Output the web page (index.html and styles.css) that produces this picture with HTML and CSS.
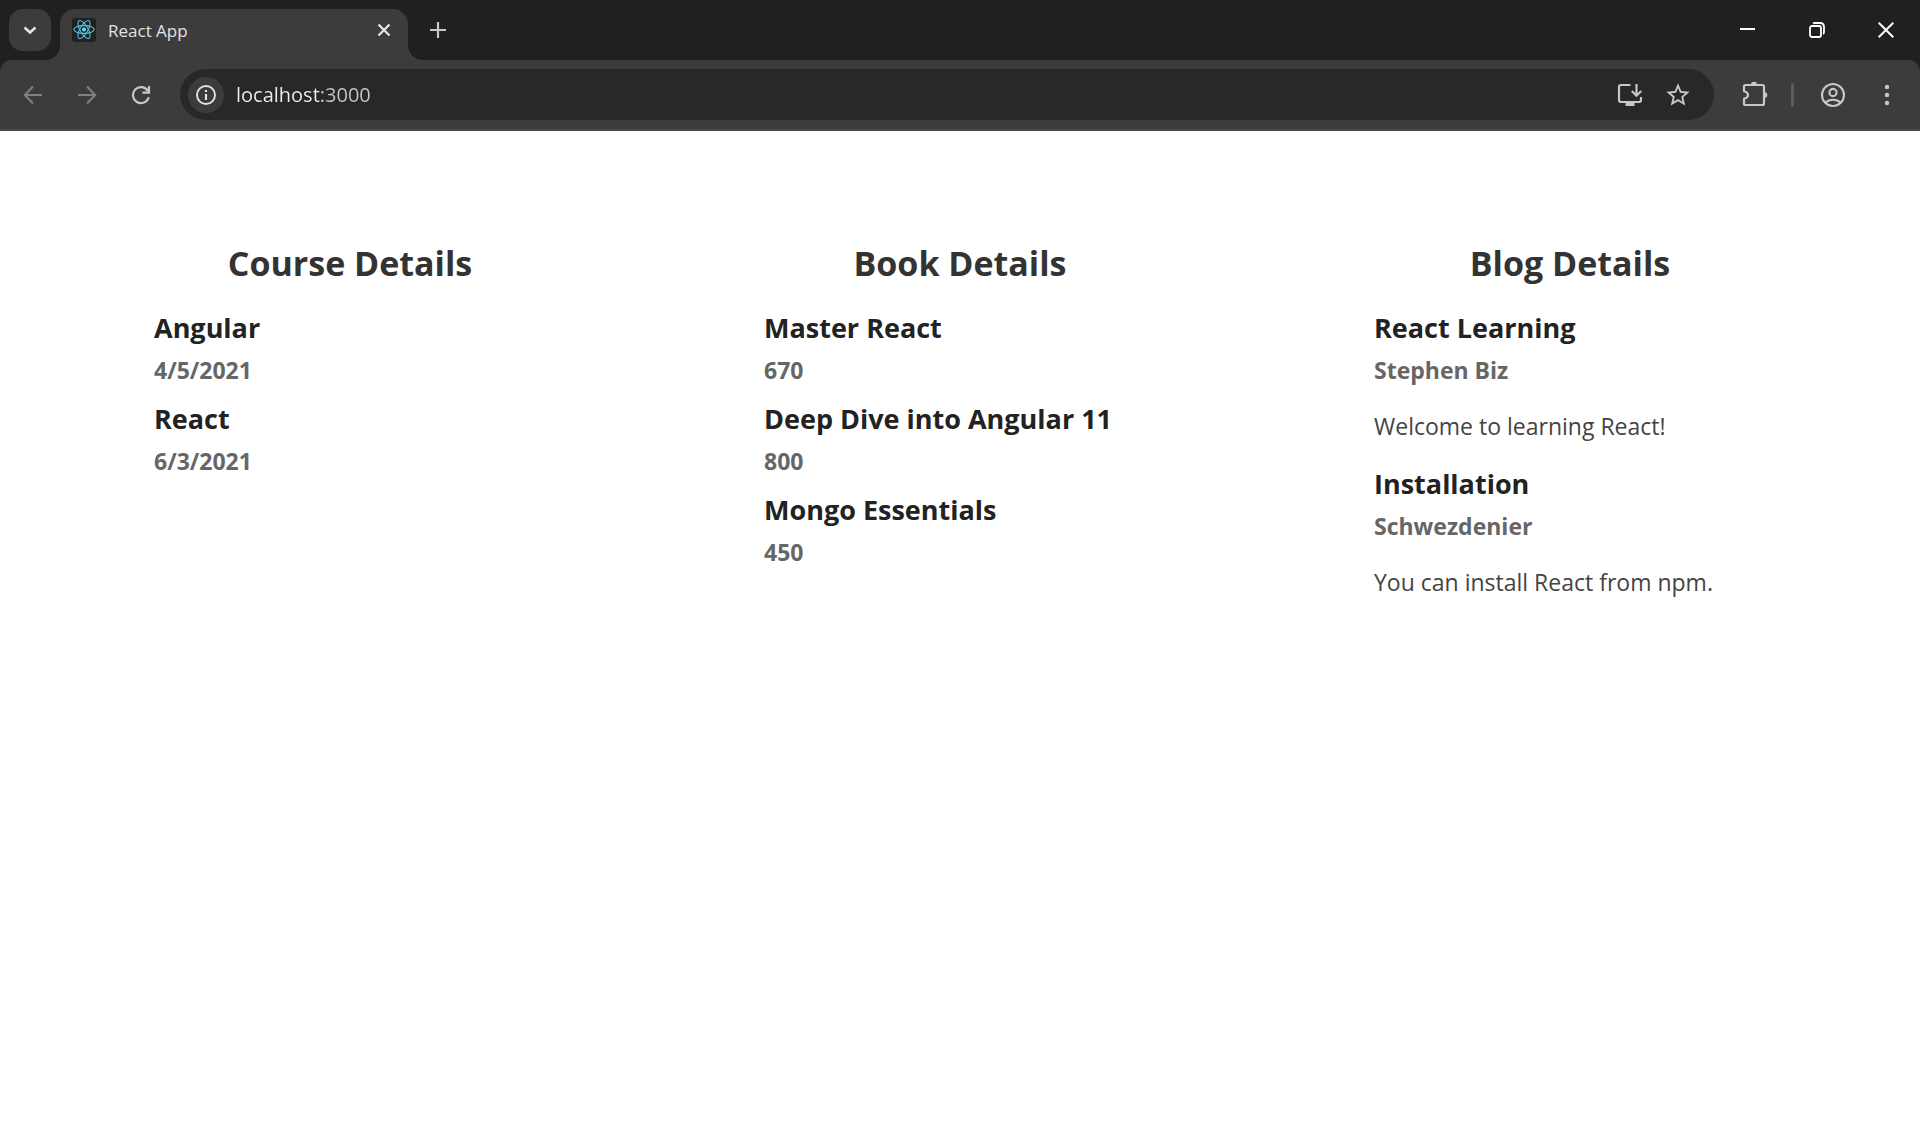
FILE: index.html
```html
<!DOCTYPE html>
<html lang="en">
<head>
<meta charset="utf-8">
<title>React App</title>
<link rel="stylesheet" href="styles.css">
</head>
<body>
<header class="browser">
  <div class="tab-strip">
    <button class="tab-search" aria-label="Search tabs">
      <svg width="14" height="14" viewBox="0 0 14 14"><path d="M1.500 4.500l5.500 5 5.500-5" fill="none" stroke="currentColor" stroke-width="2.500"/></svg>
    </button>
    <div class="tab">
      <svg class="favicon" width="24" height="24" viewBox="0 0 24 24">
        <rect width="24" height="24" rx="3" fill="#212121"/>
        <g fill="none" stroke="#53c1de" stroke-width="1.100">
          <ellipse cx="12" cy="11.500" rx="10.200" ry="3.900"/>
          <ellipse cx="12" cy="11.500" rx="10.200" ry="3.900" transform="rotate(60 12 11.500)"/>
          <ellipse cx="12" cy="11.500" rx="10.200" ry="3.900" transform="rotate(120 12 11.500)"/>
        </g>
        <circle cx="12" cy="11.500" r="2" fill="#61dafb"/>
      </svg>
      <span class="tab-title">React App</span>
      <button class="tab-close" aria-label="Close tab">
        <svg width="14" height="14" viewBox="0 0 14 14"><path d="M1.500 1.500l11 11M12.500 1.500l-11 11" fill="none" stroke="currentColor" stroke-width="2.300"/></svg>
      </button>
    </div>
    <button class="new-tab" aria-label="New tab">
      <svg width="16" height="16" viewBox="0 0 16 16"><path d="M8 0v16M0 8h16" fill="none" stroke="currentColor" stroke-width="2.200"/></svg>
    </button>
    <div class="window-controls">
      <button aria-label="Minimize"><svg width="16" height="16" viewBox="0 0 16 16"><path d="M0 7h15" stroke="currentColor" stroke-width="2"/></svg></button>
      <button aria-label="Restore"><svg width="16" height="16" viewBox="0 0 16 16" fill="none" stroke="currentColor" stroke-width="1.800"><rect x="1" y="4" width="11" height="11" rx="2"/><path d="M4 1.500Q4.500 1 6 1h5q4 0 4 4v5q0 1.500-1 2"/></svg></button>
      <button aria-label="Close"><svg width="16" height="16" viewBox="0 0 16 16"><path d="M.7.700l14.600 14.600M15.300.700L.7 15.300" stroke="currentColor" stroke-width="2"/></svg></button>
    </div>
  </div>
  <div class="toolbar">
    <button class="tool dim" aria-label="Back"><svg width="20" height="20" viewBox="0 0 20 20"><path d="M19 10H2.500M10 1.500L1.800 10l8.200 8.500" fill="none" stroke="currentColor" stroke-width="2.100"/></svg></button>
    <button class="tool dim" aria-label="Forward"><svg width="20" height="20" viewBox="0 0 20 20"><path d="M1 10h16.500M10 1.500l8.200 8.500-8.200 8.500" fill="none" stroke="currentColor" stroke-width="2.100"/></svg></button>
    <button class="tool" aria-label="Reload"><svg width="20" height="20" viewBox="0 0 20 20" fill="none" stroke="currentColor" stroke-width="2.200"><path d="M17.700 12.200A8 8 0 1 1 17 6.200"/><path d="M18 1v6.700h-6.700"/></svg></button>
    <form class="omnibox">
      <button class="site-info" type="button" aria-label="View site information"><svg width="20" height="20" viewBox="0 0 20 20"><circle cx="10" cy="10" r="9" fill="none" stroke="currentColor" stroke-width="1.900"/><path d="M10 9v6M10 5v2" stroke="currentColor" stroke-width="2.100"/></svg></button>
      <input class="address" type="text" value="localhost:3000" aria-label="Address and search bar">
      <button class="tool" type="button" aria-label="Install app"><svg width="26" height="24" viewBox="0 0 26 24" fill="none" stroke="currentColor" stroke-width="2.200"><path d="M13.500 2H4Q2 2 2 4v13q0 2 2 2h18q2 0 2-2v-3"/><path d="M8.500 19h9v4h-9z" fill="currentColor" stroke="none"/><path d="M19.500 1v11M14.800 8l4.700 4.700L24.200 8"/></svg></button>
      <button class="tool" type="button" aria-label="Bookmark this tab"><svg width="28" height="28" viewBox="0 0 24 24"><path fill="currentColor" d="M22 9.240l-7.190-.62L12 2 9.190 8.630 2 9.240l5.460 4.730L5.820 21 12 17.270 18.180 21l-1.630-7.030L22 9.240zM12 15.400l-3.760 2.270 1-4.280-3.320-2.880 4.380-.38L12 6.100l1.710 4.040 4.380.38-3.320 2.880 1 4.280L12 15.400z"/></svg></button>
    </form>
    <button class="tool" aria-label="Extensions"><svg width="28" height="28" viewBox="0 0 28 28"><path d="M4.500 4h17q1.500 0 1.500 1.500v17q0 1.500-1.500 1.500h-17Q3 24 3 22.500v-4.700q4-1 4-3.800t-4-3.800V5.500Q3 4 4.500 4z" fill="none" stroke="currentColor" stroke-width="2.200"/><path d="M10 4a3 3.300 0 0 1 6 0zM23 11a3.300 3 0 0 1 0 6z" fill="currentColor"/></svg></button>
    <span class="separator"></span>
    <button class="tool" aria-label="Profile"><svg width="26" height="26" viewBox="0 0 26 26" fill="none" stroke="currentColor" stroke-width="2.100"><circle cx="13" cy="13" r="11"/><circle cx="13" cy="10.500" r="3.600"/><path d="M5.500 20.500q3-2.800 7.500-2.800t7.500 2.800"/></svg></button>
    <button class="tool" aria-label="Menu"><svg width="6" height="22" viewBox="0 0 6 22" fill="currentColor"><circle cx="3" cy="3" r="2.200"/><circle cx="3" cy="11" r="2.200"/><circle cx="3" cy="19" r="2.200"/></svg></button>
  </div>
</header>
<main class="details">
  <section class="column">
    <h2>Course Details</h2>
    <div class="items">
      <article class="item"><h3>Angular</h3><h4>4/5/2021</h4></article>
      <article class="item"><h3>React</h3><h4>6/3/2021</h4></article>
    </div>
  </section>
  <section class="column">
    <h2>Book Details</h2>
    <div class="items">
      <article class="item"><h3>Master React</h3><h4>670</h4></article>
      <article class="item"><h3>Deep Dive into Angular 11</h3><h4>800</h4></article>
      <article class="item"><h3>Mongo Essentials</h3><h4>450</h4></article>
    </div>
  </section>
  <section class="column">
    <h2>Blog Details</h2>
    <div class="items">
      <article class="item"><h3>React Learning</h3><h4>Stephen Biz</h4><p>Welcome to learning React!</p></article>
      <article class="item"><h3>Installation</h3><h4>Schwezdenier</h4><p>You can install React from npm.</p></article>
    </div>
  </section>
</main>
</body>
</html>
```
FILE: styles.css
```css
* { box-sizing: border-box; }

body {
  margin: 0;
  background: #fff;
  font-family: "Segoe UI", "Open Sans", "Noto Sans", sans-serif;
}

button {
  display: flex;
  align-items: center;
  justify-content: center;
  flex: none;
  padding: 0;
  border: 0;
  background: none;
  color: inherit;
}

svg { display: block; flex: none; }

/* Browser frame */
.browser { background: #1f2120; color: #e3e3e3; }

.tab-strip {
  display: flex;
  height: 60px;
  padding: 9px 0 0 9px;
}

.tab-search {
  width: 42px;
  height: 42px;
  margin-right: 9px;
  border-radius: 14px;
  background: #3c3c3c;
}

.tab {
  position: relative;
  display: flex;
  align-items: center;
  width: 348px;
  padding: 0 15px 9px 12px;
  border-radius: 15px 15px 0 0;
  background: #3c3c3c;
}

.tab::before,
.tab::after {
  content: "";
  position: absolute;
  bottom: 0;
  width: 15px;
  height: 15px;
}

.tab::before {
  right: 100%;
  background: radial-gradient(circle at 0 0, transparent 15px, #3c3c3c 15px);
}

.tab::after {
  left: 100%;
  background: radial-gradient(circle at 100% 0, transparent 15px, #3c3c3c 15px);
}

.tab-title { flex: 1; padding: 2px 0 0 12px; font-size: 17px; line-height: 24px; }
.tab-close { width: 18px; height: 24px; }
.new-tab { width: 42px; height: 42px; margin-left: 9px; color: #c7c7c7; }

.window-controls { display: flex; margin-left: auto; color: #fff; }
.window-controls button { width: 69px; height: 42px; }

.toolbar {
  display: flex;
  align-items: center;
  gap: 18px;
  height: 71px;
  padding: 0 15px;
  border-bottom: 2px solid #4a4a4a;
  border-radius: 12px 12px 0 0;
  background: #3c3c3c;
  color: #c7c7c7;
}

.tool { width: 36px; height: 36px; }
.dim { color: #808080; }

.omnibox {
  display: flex;
  flex: 1;
  align-items: center;
  gap: 12px;
  height: 51px;
  margin: 0 5px 0 3px;
  padding: 0 18px 0 8px;
  border-radius: 26px;
  background: #282828;
}

.site-info {
  width: 36px;
  height: 36px;
  border-radius: 50%;
  background: #3c3c3c;
  color: #e3e3e3;
}

/* The host name is brighter than the port */
.address {
  flex: 1;
  min-width: 0;
  padding: 0;
  border: 0;
  outline: 0;
  background: linear-gradient(90deg, #f0f0f0 84px, #c7c7c7 84px);
  background-clip: text;
  color: #f0f0f0;
  -webkit-text-fill-color: transparent;
  font: inherit;
  font-size: 20px;
  line-height: 28px;
}

.separator {
  width: 3px;
  height: 24px;
  margin-right: 3px;
  border-radius: 2px;
  background: #5c5c5c;
}

/* Page content */
.details {
  display: grid;
  grid-template-columns: repeat(3, 1fr);
  padding: 108px 45px 0;
}

h2, h3, h4, p { margin: 0; }

.column h2 {
  margin-bottom: 23px;
  color: #333;
  font-size: 34px;
  line-height: 48px;
  text-align: center;
}

.items { padding-left: 109px; }
.item { margin-bottom: 15px; }
.item h3 { margin-bottom: 8px; color: #222; font-size: 27px; line-height: 36px; }
.item h4 { color: #666; font-size: 23px; line-height: 32px; }
.item p { margin: 24px 0; color: #444; font-size: 23px; line-height: 32px; }
```
